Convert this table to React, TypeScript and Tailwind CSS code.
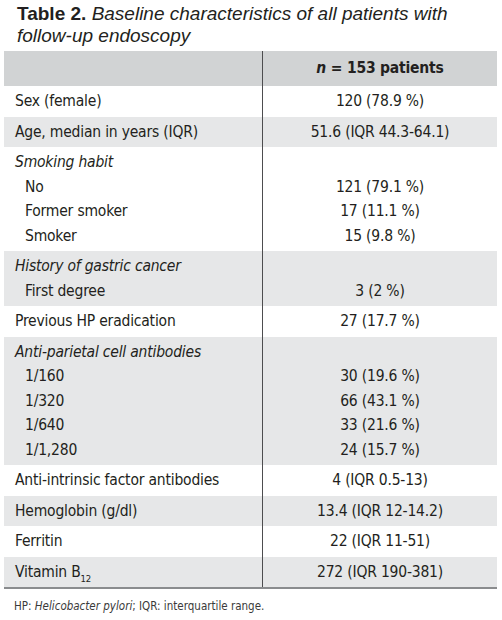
import React from "react";

type Line = { label: React.ReactNode; value?: React.ReactNode; italic?: boolean; indent?: boolean };
type Row = { lines: Line[]; shade: boolean };

const rows: Row[] = [
  { shade: false, lines: [{ label: "Sex (female)", value: "120 (78.9 %)" }] },
  { shade: true, lines: [{ label: "Age, median in years (IQR)", value: "51.6 (IQR 44.3-64.1)" }] },
  {
    shade: false,
    lines: [
      { label: "Smoking habit", italic: true },
      { label: "No", value: "121 (79.1 %)", indent: true },
      { label: "Former smoker", value: "17 (11.1 %)", indent: true },
      { label: "Smoker", value: "15 (9.8 %)", indent: true },
    ],
  },
  {
    shade: true,
    lines: [
      { label: "History of gastric cancer", italic: true },
      { label: "First degree", value: "3 (2 %)", indent: true },
    ],
  },
  { shade: false, lines: [{ label: "Previous HP eradication", value: "27 (17.7 %)" }] },
  {
    shade: true,
    lines: [
      { label: "Anti-parietal cell antibodies", italic: true },
      { label: "1/160", value: "30 (19.6 %)", indent: true },
      { label: "1/320", value: "66 (43.1 %)", indent: true },
      { label: "1/640", value: "33 (21.6 %)", indent: true },
      { label: "1/1,280", value: "24 (15.7 %)", indent: true },
    ],
  },
  { shade: false, lines: [{ label: "Anti-intrinsic factor antibodies", value: "4 (IQR 0.5-13)" }] },
  { shade: true, lines: [{ label: "Hemoglobin (g/dl)", value: "13.4 (IQR 12-14.2)" }] },
  { shade: false, lines: [{ label: "Ferritin", value: "22 (IQR 11-51)" }] },
  {
    shade: true,
    lines: [
      {
        label: (
          <>
            Vitamin B<span className="text-[9.5px] relative top-[5px]">12</span>
          </>
        ),
        value: "272 (IQR 190-381)",
      },
    ],
  },
];

const body = { fontFamily: '"DejaVu Sans Condensed", "Liberation Sans", sans-serif' };

export default function App() {
  return (
    <div className="w-[502px] h-[620px] bg-white text-[#231f20] pt-[3px]">
      <div
        className="pl-[17px] pr-2 text-[19px] leading-[22px]"
        style={{ fontFamily: '"Liberation Sans", Arial, sans-serif' }}
      >
        <span className="font-bold">Table 2.</span>{" "}
        <span className="italic">Baseline characteristics of all patients with follow-up endoscopy</span>
      </div>
      <div className="ml-[4px] w-[493px] mt-[4px] text-[15.5px] tracking-[-0.2px]" style={body}>
        <div className="flex bg-[#d1d3d4] h-[35px]">
          <div className="w-[258px]" />
          <div className="flex-1 border-l border-[#4d4d4f] flex items-center justify-center font-bold">
            <span>
              <span className="italic">n</span> = 153 patients
            </span>
          </div>
        </div>
        {rows.map((r, i) => (
          <div key={i} className={`flex ${r.shade ? "bg-[#e6e7e8]" : "bg-white"}`}>
            <div className="w-[258px] py-[3px] pl-[11px]">
              {r.lines.map((l, j) => (
                <div
                  key={j}
                  className={`h-[24.5px] leading-[24.5px] whitespace-nowrap ${l.italic ? "italic" : ""} ${
                    l.indent ? "pl-[10px]" : ""
                  }`}
                >
                  {l.label}
                </div>
              ))}
            </div>
            <div className="flex-1 border-l border-[#4d4d4f] py-[3px] text-center">
              {r.lines.map((l, j) => (
                <div key={j} className="h-[24.5px] leading-[24.5px] whitespace-nowrap">
                  {l.value ?? ""}
                </div>
              ))}
            </div>
          </div>
        ))}
        <div className="h-[2px] bg-[#8a8c8e]" />
      </div>
      <div className="pl-[14px] mt-[9px] text-[11.5px] text-[#3a3a3a]" style={body}>
        HP: <span className="italic">Helicobacter pylori</span>; IQR: interquartile range.
      </div>
    </div>
  );
}
